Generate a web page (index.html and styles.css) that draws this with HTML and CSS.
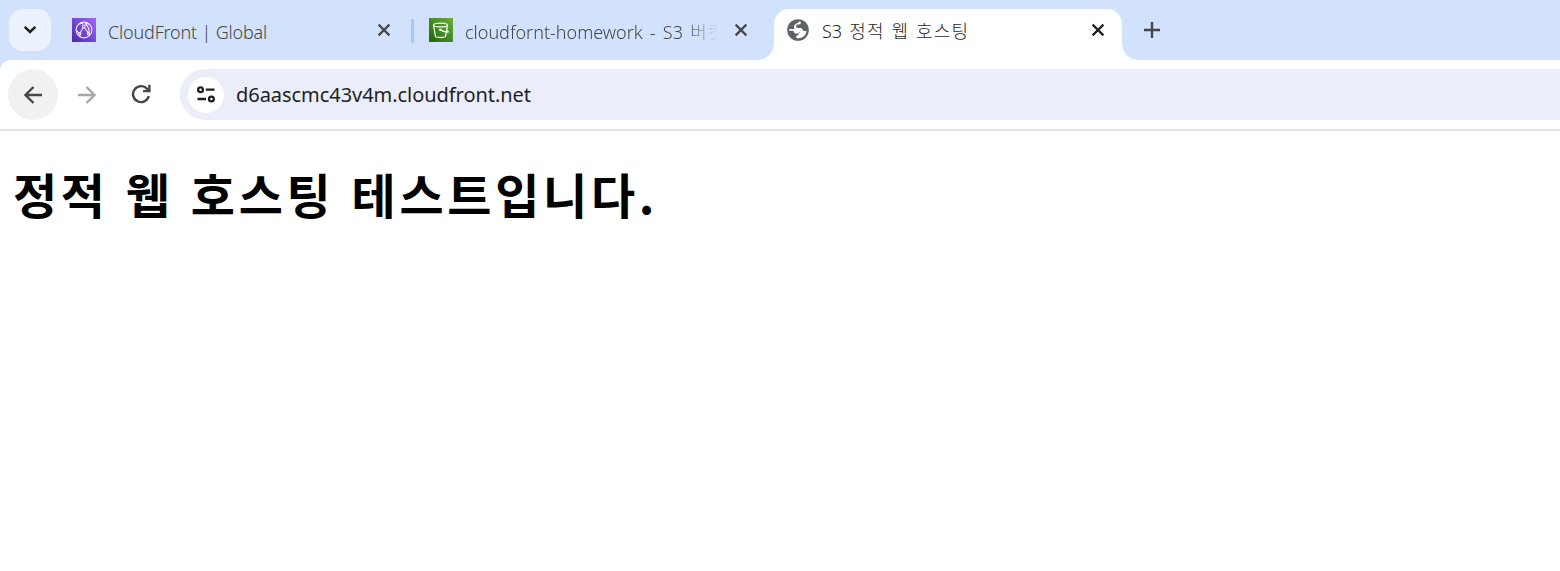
FILE: index.html
```html
<!DOCTYPE html>
<html lang="ko">
<head>
<meta charset="utf-8">
<title>S3 정적 웹 호스팅</title>
<link rel="stylesheet" href="styles.css">
</head>
<body>
<div class="tabstrip">
  <button class="tab-search" aria-label="Search tabs">
    <svg width="14" height="10" viewBox="0 0 14 10"><path d="M1.700 1.800 7 7l5.300-5.200" fill="none" stroke="#1f1f1f" stroke-width="2.500"/></svg>
  </button>
  <div class="tab tab-first">
    <svg class="favicon" width="24" height="24" viewBox="0 0 24 24">
      <defs><linearGradient id="purple" x1="0" y1="1" x2="1" y2="0"><stop stop-color="#4d27a8"/><stop offset="1" stop-color="#a166ff"/></linearGradient></defs>
      <path fill="url(#purple)" d="M0 0h24v24H0z"/>
      <g fill="none" stroke="#eee6ff" stroke-width="1.100"><circle cx="12" cy="12" r="7.900"/><path d="M7 6.200c1.500-.9 3-.9 4-.4M11.200 9.800 7.900 15M12.500 9.700l3.800 5.200M13 5.500c3.500 2.500 4.600 6.500 4 11M4.500 12.500l2.800 2.800M17.500 6.500c-1.500-1-3-1.300-4.700-.9M8 16.500v2.300"/><circle cx="11.800" cy="8.400" r="1.400"/><circle cx="7.900" cy="15.800" r="1.200"/><circle cx="16.500" cy="15.800" r="1.200"/></g>
    </svg>
    <span class="title title-cloudfront">CloudFront | Global</span>
    <svg class="close" width="14" height="14" viewBox="0 0 14 14"><path d="m1.600 1.600 10.800 10.800m0-10.800L1.600 12.400"/></svg>
  </div>
  <span class="divider"></span>
  <div class="tab tab-second">
    <svg class="favicon" width="24" height="24" viewBox="0 0 24 24">
      <defs><linearGradient id="green" x1="0" y1="1" x2="1" y2="0"><stop stop-color="#1b660f"/><stop offset="1" stop-color="#6cae3e"/></linearGradient></defs>
      <path fill="url(#green)" d="M0 0h24v24H0z"/>
      <g fill="none" stroke="#f1ffe9" stroke-width="1.300"><ellipse cx="11.500" cy="7" rx="7" ry="1.900"/><path d="M4.500 7.200 6.400 18c.3 2 9.900 2 10.200 0L18.500 7.200M11.300 11.900c2.200 1.200 5.200 2.200 7.400 2.100 1.300-.1.200-1.100-1.100-1.800"/></g><circle cx="11.300" cy="11.800" r="1.300" fill="#f1ffe9"/>
    </svg>
    <span class="title title-s3">cloudfornt-homework - S3 <span class="ko">버킷</span></span>
    <svg class="close" width="14" height="14" viewBox="0 0 14 14"><path d="m1.600 1.600 10.800 10.800m0-10.800L1.600 12.400"/></svg>
  </div>
  <div class="tab tab-active">
    <svg class="globe" width="22" height="22" viewBox="0 0 22 22">
      <circle cx="11" cy="11" r="10.800" fill="#5f6368"/>
      <path d="M12 2.500c2 0 2.400.8 1.600 1.900-.5.800-1.300 1-2.600 1-1.400 0-1.900.7-1.900 1.700 0 1.300.7 2 2.100 2h1.900c1.500 0 2.200.7 2.500 1.700.3.900 1 1.200 2.200 1.200h1.700c-.4 4.200-3.700 7.200-8.200 7.200-.9 0-1.500-.1-2-.3v-2.200c1.700-.1 2.300-.6 2.300-1.600 0-.7.500-1.100 1.400-1.300-.9-.9-1.500-1.900-2.900-2.700-1.900-.4-3.200-1.100-3.200-2.700 0-2.200 1.500-3.600 3.600-4.500.9-.4 1.400-.8 1.500-1.400z" fill="#fff"/>
      <path d="M2.300 10h5.200c3 0 4.700.9 4.700 2.900 0 1.300-.7 1.600-2.300 1.700-1.800.1-2.600-.3-2.900-1.500-.3-1-.9-1.300-2-1.300H2.300z" fill="#fff"/>
    </svg>
    <span class="title title-hosting">S3 <span class="ko">정적 웹 호스팅</span></span>
    <svg class="close" width="14" height="14" viewBox="0 0 14 14"><path d="m1.600 1.600 10.800 10.800m0-10.800L1.600 12.400"/></svg>
  </div>
  <svg class="new-tab" width="16" height="16" viewBox="0 0 16 16"><path d="M8 0v16M0 8h16" stroke="#474747" stroke-width="2.400"/></svg>
</div>
<div class="toolbar">
  <button class="back" aria-label="Back"><svg width="18" height="18" viewBox="0 0 18 18"><path d="M18 9H1.500M9.500 1 1.500 9l8 8" fill="none" stroke="#474747" stroke-width="2.400"/></svg></button>
  <svg class="forward" width="18" height="18" viewBox="0 0 18 18"><path d="M0 9h16.500M8.500 1l8 8-8 8" fill="none" stroke="#a8a8a8" stroke-width="2.400"/></svg>
  <svg class="reload" width="20" height="20" viewBox="0 0 20 20"><path d="M17.800 12A8 8 0 1 1 16.200 5L18 6.700M18.400.800v6.300h-6.300" fill="none" stroke="#474747" stroke-width="2.400"/></svg>
  <div class="address">
    <span class="site-info"><svg width="19" height="17" viewBox="0 0 19 17" fill="none" stroke="#1f1f1f" stroke-width="2.300"><circle cx="3.500" cy="3.700" r="2.400"/><path d="M8.800 3.700h8.700M.5 13H9"/><circle cx="14.400" cy="13" r="2.400"/></svg></span>
    <span class="url">d6aascmc43v4m.cloudfront.net</span>
  </div>
</div>
<main><h1>정적 웹 호스팅 테스트입니다.</h1></main>
</body>
</html>
```
FILE: styles.css
```css
* { box-sizing: border-box; }
body { margin: 0; background: #fff; overflow: hidden; font-family: "Noto Sans", "Noto Sans CJK KR", sans-serif; }
button { border: 0; padding: 0; }
svg { display: block; flex: none; }
.tabstrip { display: flex; height: 60px; background: #d3e2fc; }
.tab-search { width: 42px; height: 42px; margin: 9px 0 0 9px; border-radius: 14px; background: #ebf2fd; display: grid; place-items: center; flex: none; }
.tab { display: flex; height: 51px; margin-top: 9px; flex: none; position: relative; }
.tab-first { width: 360px; padding-left: 21px; }
.divider { width: 3px; height: 24px; margin-top: 19px; background: #a8c7fa; border-radius: 1px; flex: none; }
.tab-second { width: 360px; padding-left: 15px; }
.tab-active { width: 348px; padding-left: 13px; background: #fff; border-radius: 15px 15px 0 0; }
.tab-active::before, .tab-active::after { content: ""; position: absolute; bottom: 0; width: 16px; height: 16px; }
.tab-active::before { right: 100%; background: radial-gradient(circle at 0 0, transparent 15.500px, #fff 16px); }
.tab-active::after { left: 100%; background: radial-gradient(circle at 100% 0, transparent 15.500px, #fff 16px); }
.favicon { margin-top: 9px; }
.globe { margin-top: 10px; }
.title { margin: 9px 0 0 12px; font-size: 18px; font-weight: 300; line-height: 28px; color: #474747; white-space: nowrap; overflow: hidden; }
.title-cloudfront { width: 252px; letter-spacing: -.180px; }
.title-s3 { width: 252px; margin-top: 8px; word-spacing: 2.500px; -webkit-mask-image: linear-gradient(90deg, #000 218px, transparent 254px); mask-image: linear-gradient(90deg, #000 218px, transparent 254px); }
.title-hosting { width: 243px; margin: 7px 0 0 13px; color: #1f1f1f; word-spacing: 1.500px; }
.ko { font-family: "Noto Sans CJK KR", sans-serif; letter-spacing: 1.200px; }
.title-hosting .ko { margin-left: 1px; word-spacing: .5px; }
.close { margin: 14px 0 0 17px; fill: none; stroke: #474747; stroke-width: 2.200; }
.title-hosting + .close { margin-left: 26px; stroke: #1f1f1f; }
.new-tab { margin: 22px 0 0 22px; }
.toolbar { display: flex; height: 71px; padding-top: 9px; background: #fff; border-bottom: 2px solid #e1e1e1; position: relative; }
.toolbar::before { content: ""; position: absolute; left: 0; top: 0; width: 10px; height: 10px; background: radial-gradient(circle at 100% 100%, transparent 9.500px, #d3e2fc 10px); }
.back { width: 50px; height: 51px; margin-left: 8px; border-radius: 50%; background: #f1f1f1; display: grid; place-items: center; flex: none; }
.forward { margin: 17px 0 0 20px; }
.reload { margin: 15px 0 0 35px; }
.address { flex: 1; height: 51px; margin-left: 29px; padding-left: 8px; display: flex; align-items: center; background: #ebeef8; border-radius: 26px 0 0 26px; }
.site-info { width: 36px; height: 36px; border-radius: 50%; background: #fff; display: grid; place-items: center; flex: none; }
.url { margin-left: 12px; font-size: 20px; line-height: 28px; letter-spacing: -.050px; color: #1f1f1f; }
main { padding: 26px 13px; }
h1 { margin: 0; font: 700 48px/72px "Noto Sans CJK KR", sans-serif; letter-spacing: 3.700px; color: #000; white-space: nowrap; }
```
